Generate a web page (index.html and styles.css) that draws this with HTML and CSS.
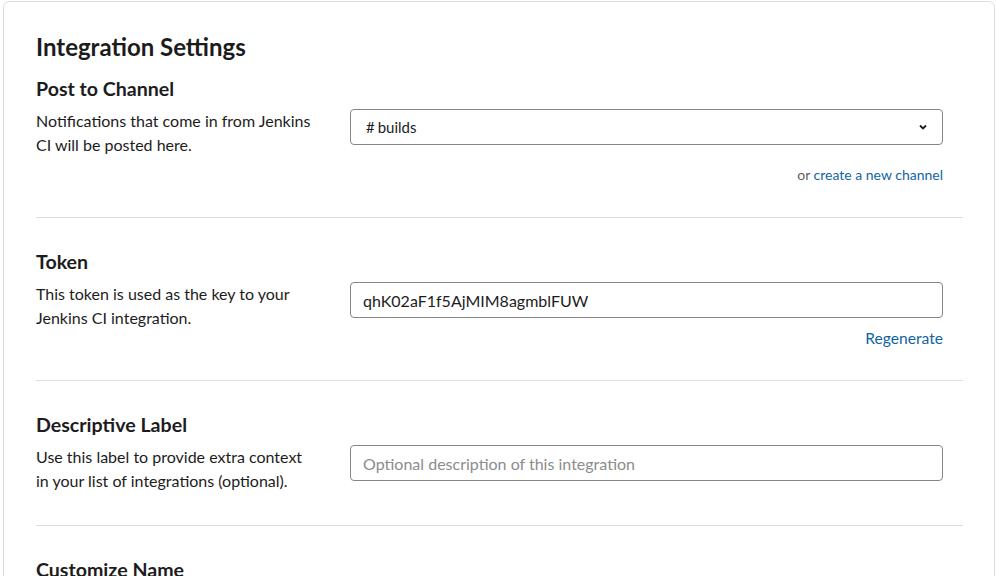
FILE: index.html
```html
<!DOCTYPE html>
<html>
<head>
<meta charset="utf-8">
<link rel="stylesheet" href="styles.css">
</head>
<body>
<div class="card">
  <h1 class="title">Integration Settings</h1>
  <section class="section first">
    <h2 class="heading">Post to Channel</h2>
    <div class="row">
      <p class="desc">Notifications that come in from Jenkins CI will be posted here.</p>
      <div class="field">
        <div class="select">
          <span class="hash">#</span><span>builds</span>
          <svg class="chev" width="10" height="8" viewBox="0 0 10 8"><path d="M2 2.5 L5 5.5 L8 2.5" fill="none" stroke="#1d1c1d" stroke-width="1.8"/></svg>
        </div>
        <div class="hint"><span class="or">or</span> <a class="link">create a new channel</a></div>
      </div>
    </div>
  </section>
  <section class="section">
    <h2 class="heading">Token</h2>
    <div class="row">
      <p class="desc">This token is used as the key to your Jenkins CI integration.</p>
      <div class="field">
        <div class="input">qhK02aF1f5AjMIM8agmblFUW</div>
        <div class="regen"><a class="link">Regenerate</a></div>
      </div>
    </div>
  </section>
  <section class="section">
    <h2 class="heading">Descriptive Label</h2>
    <div class="row">
      <p class="desc">Use this label to provide extra context in your list of integrations (optional).</p>
      <div class="field">
        <div class="input placeholder">Optional description of this integration</div>
      </div>
    </div>
  </section>
  <section class="section last">
    <h2 class="heading">Customize Name</h2>
  </section>
</div>
</body>
</html>
```
FILE: styles.css
```css
html, body {
  margin: 0;
  padding: 0;
  background: #ffffff;
}
body {
  font-family: Lato, "Liberation Sans", sans-serif;
  color: #1d1c1d;
  padding: 1px 1px 0 3px;
  height: 575px;
  overflow: hidden;
}
.card {
  border: 1px solid #dddddd;
  border-radius: 6px;
  padding: 0 31px 0 32px;
  height: 700px;
}
.title {
  margin: 0;
  padding-top: 30px;
  font-size: 24px;
  line-height: 30px;
  font-weight: 700;
}
.section {
  border-bottom: 1px solid #dddddd;
  padding: 31px 0 32px 0;
}
.section.first {
  padding-top: 14px;
}
.section.last {
  border-bottom: none;
}
.heading {
  margin: 0 0 7px 0;
  font-size: 19.6px;
  line-height: 26px;
  font-weight: 700;
}
.row {
  display: flex;
  align-items: flex-start;
}
.desc {
  margin: 0;
  width: 280px;
  margin-right: 34px;
  font-size: 16px;
  line-height: 24px;
}
.field {
  width: 593px;
}
.select, .input {
  box-sizing: border-box;
  height: 36px;
  border: 1px solid #868686;
  border-radius: 4px;
  font-size: 15px;
  display: flex;
  align-items: center;
}
.select {
  padding: 0 15px;
}
.hash {
  margin-right: 3px;
}
.chev {
  margin-left: auto;
  margin-right: -1px;
}
.input {
  padding: 0 12px;
  font-size: 16px;
}
.input.placeholder {
  color: #8c8c8c;
}
.hint {
  text-align: right;
  font-size: 14px;
  line-height: 20px;
  margin-top: 20px;
}
.or {
  color: #616061;
}
.link {
  color: #1264a3;
  text-decoration: none;
}
.regen {
  text-align: right;
  font-size: 15.6px;
  line-height: 20px;
  margin-top: 10px;
}
```
